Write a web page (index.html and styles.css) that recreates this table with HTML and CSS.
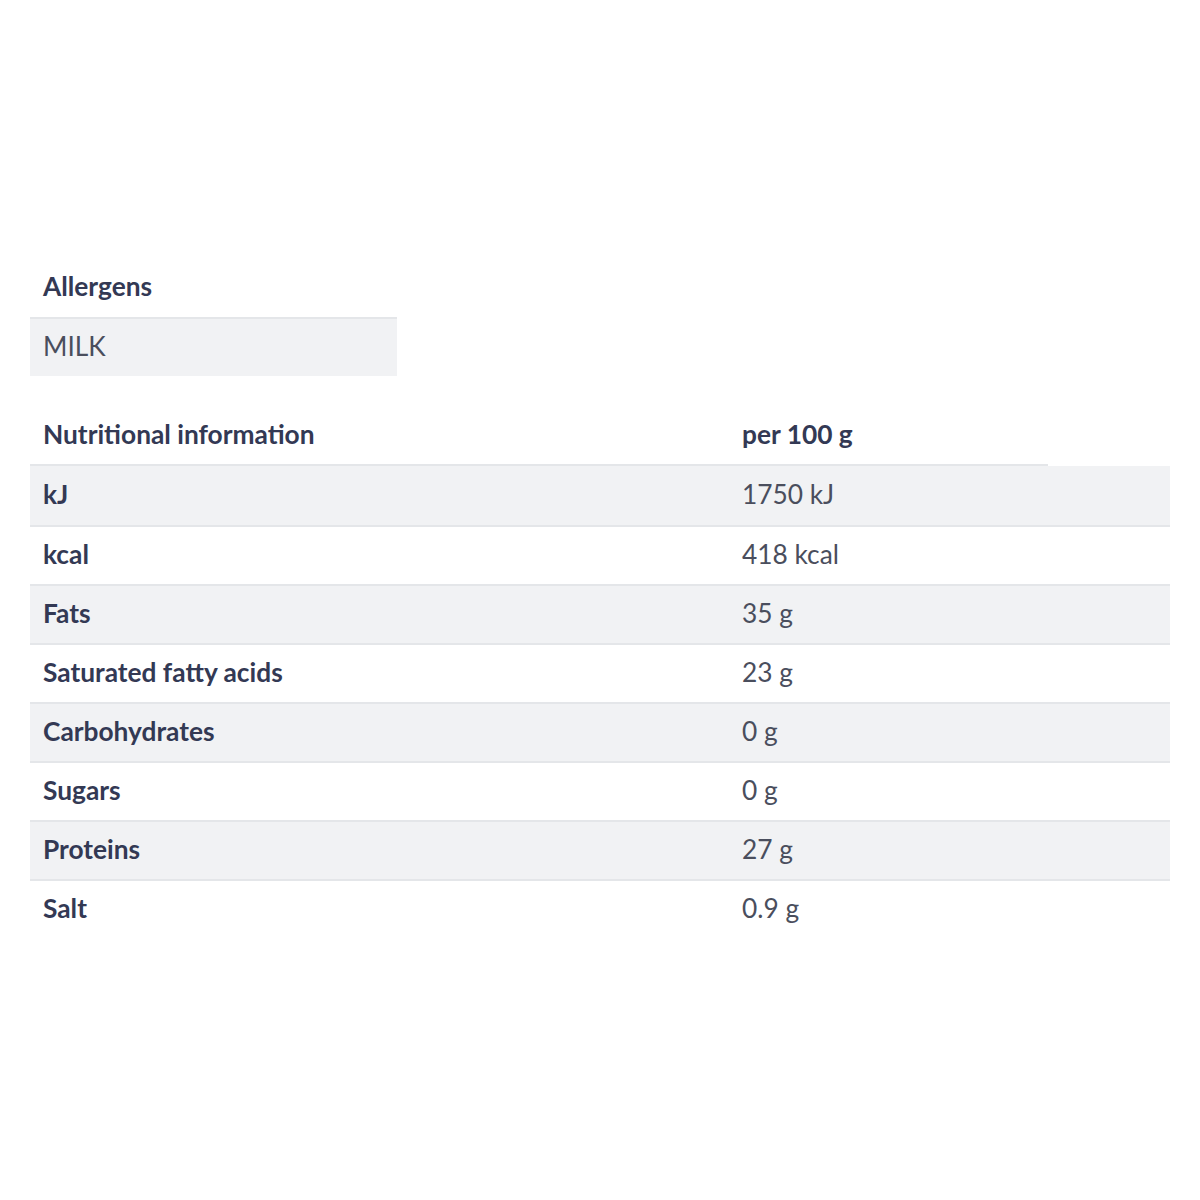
FILE: index.html
```html
<!DOCTYPE html>
<html>
<head>
<meta charset="utf-8">
<link rel="stylesheet" href="styles.css">
</head>
<body>
<div class="page">
  <section class="allergens">
    <div class="head-cell">Allergens</div>
    <div class="allergen-cell">MILK</div>
  </section>
  <section class="nutrition">
    <div class="nhead">
      <div class="cell label">Nutritional information</div>
      <div class="cell label">per 100 g</div>
    </div>
    <div class="row shade"><div class="cell label">kJ</div><div class="cell value">1750 kJ</div></div>
    <div class="row"><div class="cell label">kcal</div><div class="cell value">418 kcal</div></div>
    <div class="row shade"><div class="cell label">Fats</div><div class="cell value">35 g</div></div>
    <div class="row"><div class="cell label">Saturated fatty acids</div><div class="cell value">23 g</div></div>
    <div class="row shade"><div class="cell label">Carbohydrates</div><div class="cell value">0 g</div></div>
    <div class="row"><div class="cell label">Sugars</div><div class="cell value">0 g</div></div>
    <div class="row shade"><div class="cell label">Proteins</div><div class="cell value">27 g</div></div>
    <div class="row"><div class="cell label">Salt</div><div class="cell value">0.9 g</div></div>
  </section>
</div>
</body>
</html>
```

FILE: styles.css
```css
html, body {
  margin: 0;
  padding: 0;
  background: #ffffff;
}
body {
  font-family: Lato, "Open Sans", "Liberation Sans", sans-serif;
  font-size: 26.3px;
  line-height: 1.2;
  color: #333954;
}
.page {
  padding: 258px 30px 0 30px;
  display: flex;
  flex-direction: column;
  gap: 30px;
}
.allergens {
  width: 367px;
  display: flex;
  flex-direction: column;
}
.head-cell {
  height: 58px;
  padding-bottom: 1px;
  display: flex;
  align-items: center;
  padding-left: 13px;
  font-weight: 700;
}
.allergen-cell {
  height: 56px;
  padding-bottom: 1px;
  border-top: 2px solid #e4e6e9;
  background: #f1f2f4;
  display: flex;
  align-items: center;
  padding-left: 13px;
  color: #4a4e5d;
}
.nutrition {
  display: flex;
  flex-direction: column;
}
.nhead {
  width: 1018px;
  height: 58px;
  border-bottom: 2px solid #e4e6e9;
  display: grid;
  grid-template-columns: 699px 1fr;
}
.row {
  height: 57px;
  display: grid;
  grid-template-columns: 699px 1fr;
  border-top: 2px solid #e4e6e9;
}
.nhead + .row {
  border-top: none;
  height: 59px;
}
.row.shade {
  background: #f1f2f4;
}
.cell {
  display: flex;
  align-items: center;
  padding-left: 13px;
  padding-bottom: 1px;
}
.label {
  font-weight: 700;
}
.value {
  color: #4a4e5d;
}
```
